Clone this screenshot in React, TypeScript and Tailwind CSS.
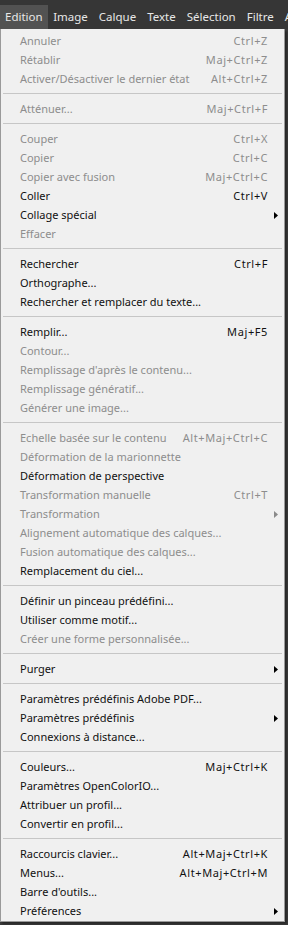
type Item = {
  label: string;
  shortcut?: string;
  disabled?: boolean;
  submenu?: boolean;
};

const sections: Item[][] = [
  [
    { label: "Annuler", shortcut: "Ctrl+Z", disabled: true },
    { label: "Rétablir", shortcut: "Maj+Ctrl+Z", disabled: true },
    { label: "Activer/Désactiver le dernier état", shortcut: "Alt+Ctrl+Z", disabled: true },
  ],
  [{ label: "Atténuer...", shortcut: "Maj+Ctrl+F", disabled: true }],
  [
    { label: "Couper", shortcut: "Ctrl+X", disabled: true },
    { label: "Copier", shortcut: "Ctrl+C", disabled: true },
    { label: "Copier avec fusion", shortcut: "Maj+Ctrl+C", disabled: true },
    { label: "Coller", shortcut: "Ctrl+V" },
    { label: "Collage spécial", submenu: true },
    { label: "Effacer", disabled: true },
  ],
  [
    { label: "Rechercher", shortcut: "Ctrl+F" },
    { label: "Orthographe..." },
    { label: "Rechercher et remplacer du texte..." },
  ],
  [
    { label: "Remplir...", shortcut: "Maj+F5" },
    { label: "Contour...", disabled: true },
    { label: "Remplissage d'après le contenu...", disabled: true },
    { label: "Remplissage génératif...", disabled: true },
    { label: "Générer une image...", disabled: true },
  ],
  [
    { label: "Echelle basée sur le contenu", shortcut: "Alt+Maj+Ctrl+C", disabled: true },
    { label: "Déformation de la marionnette", disabled: true },
    { label: "Déformation de perspective" },
    { label: "Transformation manuelle", shortcut: "Ctrl+T", disabled: true },
    { label: "Transformation", disabled: true, submenu: true },
    { label: "Alignement automatique des calques...", disabled: true },
    { label: "Fusion automatique des calques...", disabled: true },
    { label: "Remplacement du ciel..." },
  ],
  [
    { label: "Définir un pinceau prédéfini..." },
    { label: "Utiliser comme motif..." },
    { label: "Créer une forme personnalisée...", disabled: true },
  ],
  [{ label: "Purger", submenu: true }],
  [
    { label: "Paramètres prédéfinis Adobe PDF..." },
    { label: "Paramètres prédéfinis", submenu: true },
    { label: "Connexions à distance..." },
  ],
  [
    { label: "Couleurs...", shortcut: "Maj+Ctrl+K" },
    { label: "Paramètres OpenColorIO..." },
    { label: "Attribuer un profil..." },
    { label: "Convertir en profil..." },
  ],
  [
    { label: "Raccourcis clavier...", shortcut: "Alt+Maj+Ctrl+K" },
    { label: "Menus...", shortcut: "Alt+Maj+Ctrl+M" },
    { label: "Barre d'outils..." },
    { label: "Préférences", submenu: true },
  ],
];

const topMenus = ["Image", "Calque", "Texte", "Sélection", "Filtre", "A"];

function Arrow({ disabled }: { disabled?: boolean }) {
  return (
    <svg width="4" height="7" viewBox="0 0 4 7" className="absolute right-[6px] top-[6px]">
      <path d="M0 0 L4 3.5 L0 7 Z" fill={disabled ? "#8a8a8a" : "#000"} />
    </svg>
  );
}

function Row({ item }: { item: Item }) {
  const color = item.disabled ? "text-[#8d8d8d]" : "text-[#111]";
  return (
    <div className={`relative flex h-[19px] items-center pl-[19px] pr-[16px] ${color}`}>
      <span className="flex-1 whitespace-nowrap">{item.label}</span>
      {item.shortcut && (
        <span className="whitespace-nowrap tracking-[0.6px]">{item.shortcut}</span>
      )}
      {item.submenu && <Arrow disabled={item.disabled} />}
    </div>
  );
}

export default function App() {
  return (
    <div
      className="h-[925px] w-[288px] overflow-hidden bg-[#3c3c3c] text-[11px]"
      style={{ fontFamily: '"Noto Sans", "Open Sans", sans-serif' }}
    >
      {/* barre de menus */}
      <div className="flex h-[29px] items-end bg-[#363636] text-[11.5px] text-[#e8e8e8]">
        <div className="flex h-[24px] items-center bg-[#525252] px-[5px]">Edition</div>
        {topMenus.map((m) => (
          <div key={m} className="flex h-[24px] items-center whitespace-nowrap px-[5.5px]">
            {m}
          </div>
        ))}
      </div>

      {/* menu Edition */}
      <div className="w-[285px] border-x border-b border-[#9a9a9a] bg-[#f0f0f0] pt-[3px] shadow-[2px_2px_2px_rgba(0,0,0,0.35)]">
        {sections.map((sec, i) => (
          <div key={i}>
            {i > 0 && (
              <div className="pt-[4px] pb-[6px] pl-[2px] pr-[2px]">
                <div className="h-px bg-[#c6c6c6]" />
              </div>
            )}
            {sec.map((item) => (
              <Row key={item.label} item={item} />
            ))}
          </div>
        ))}
      </div>
    </div>
  );
}
